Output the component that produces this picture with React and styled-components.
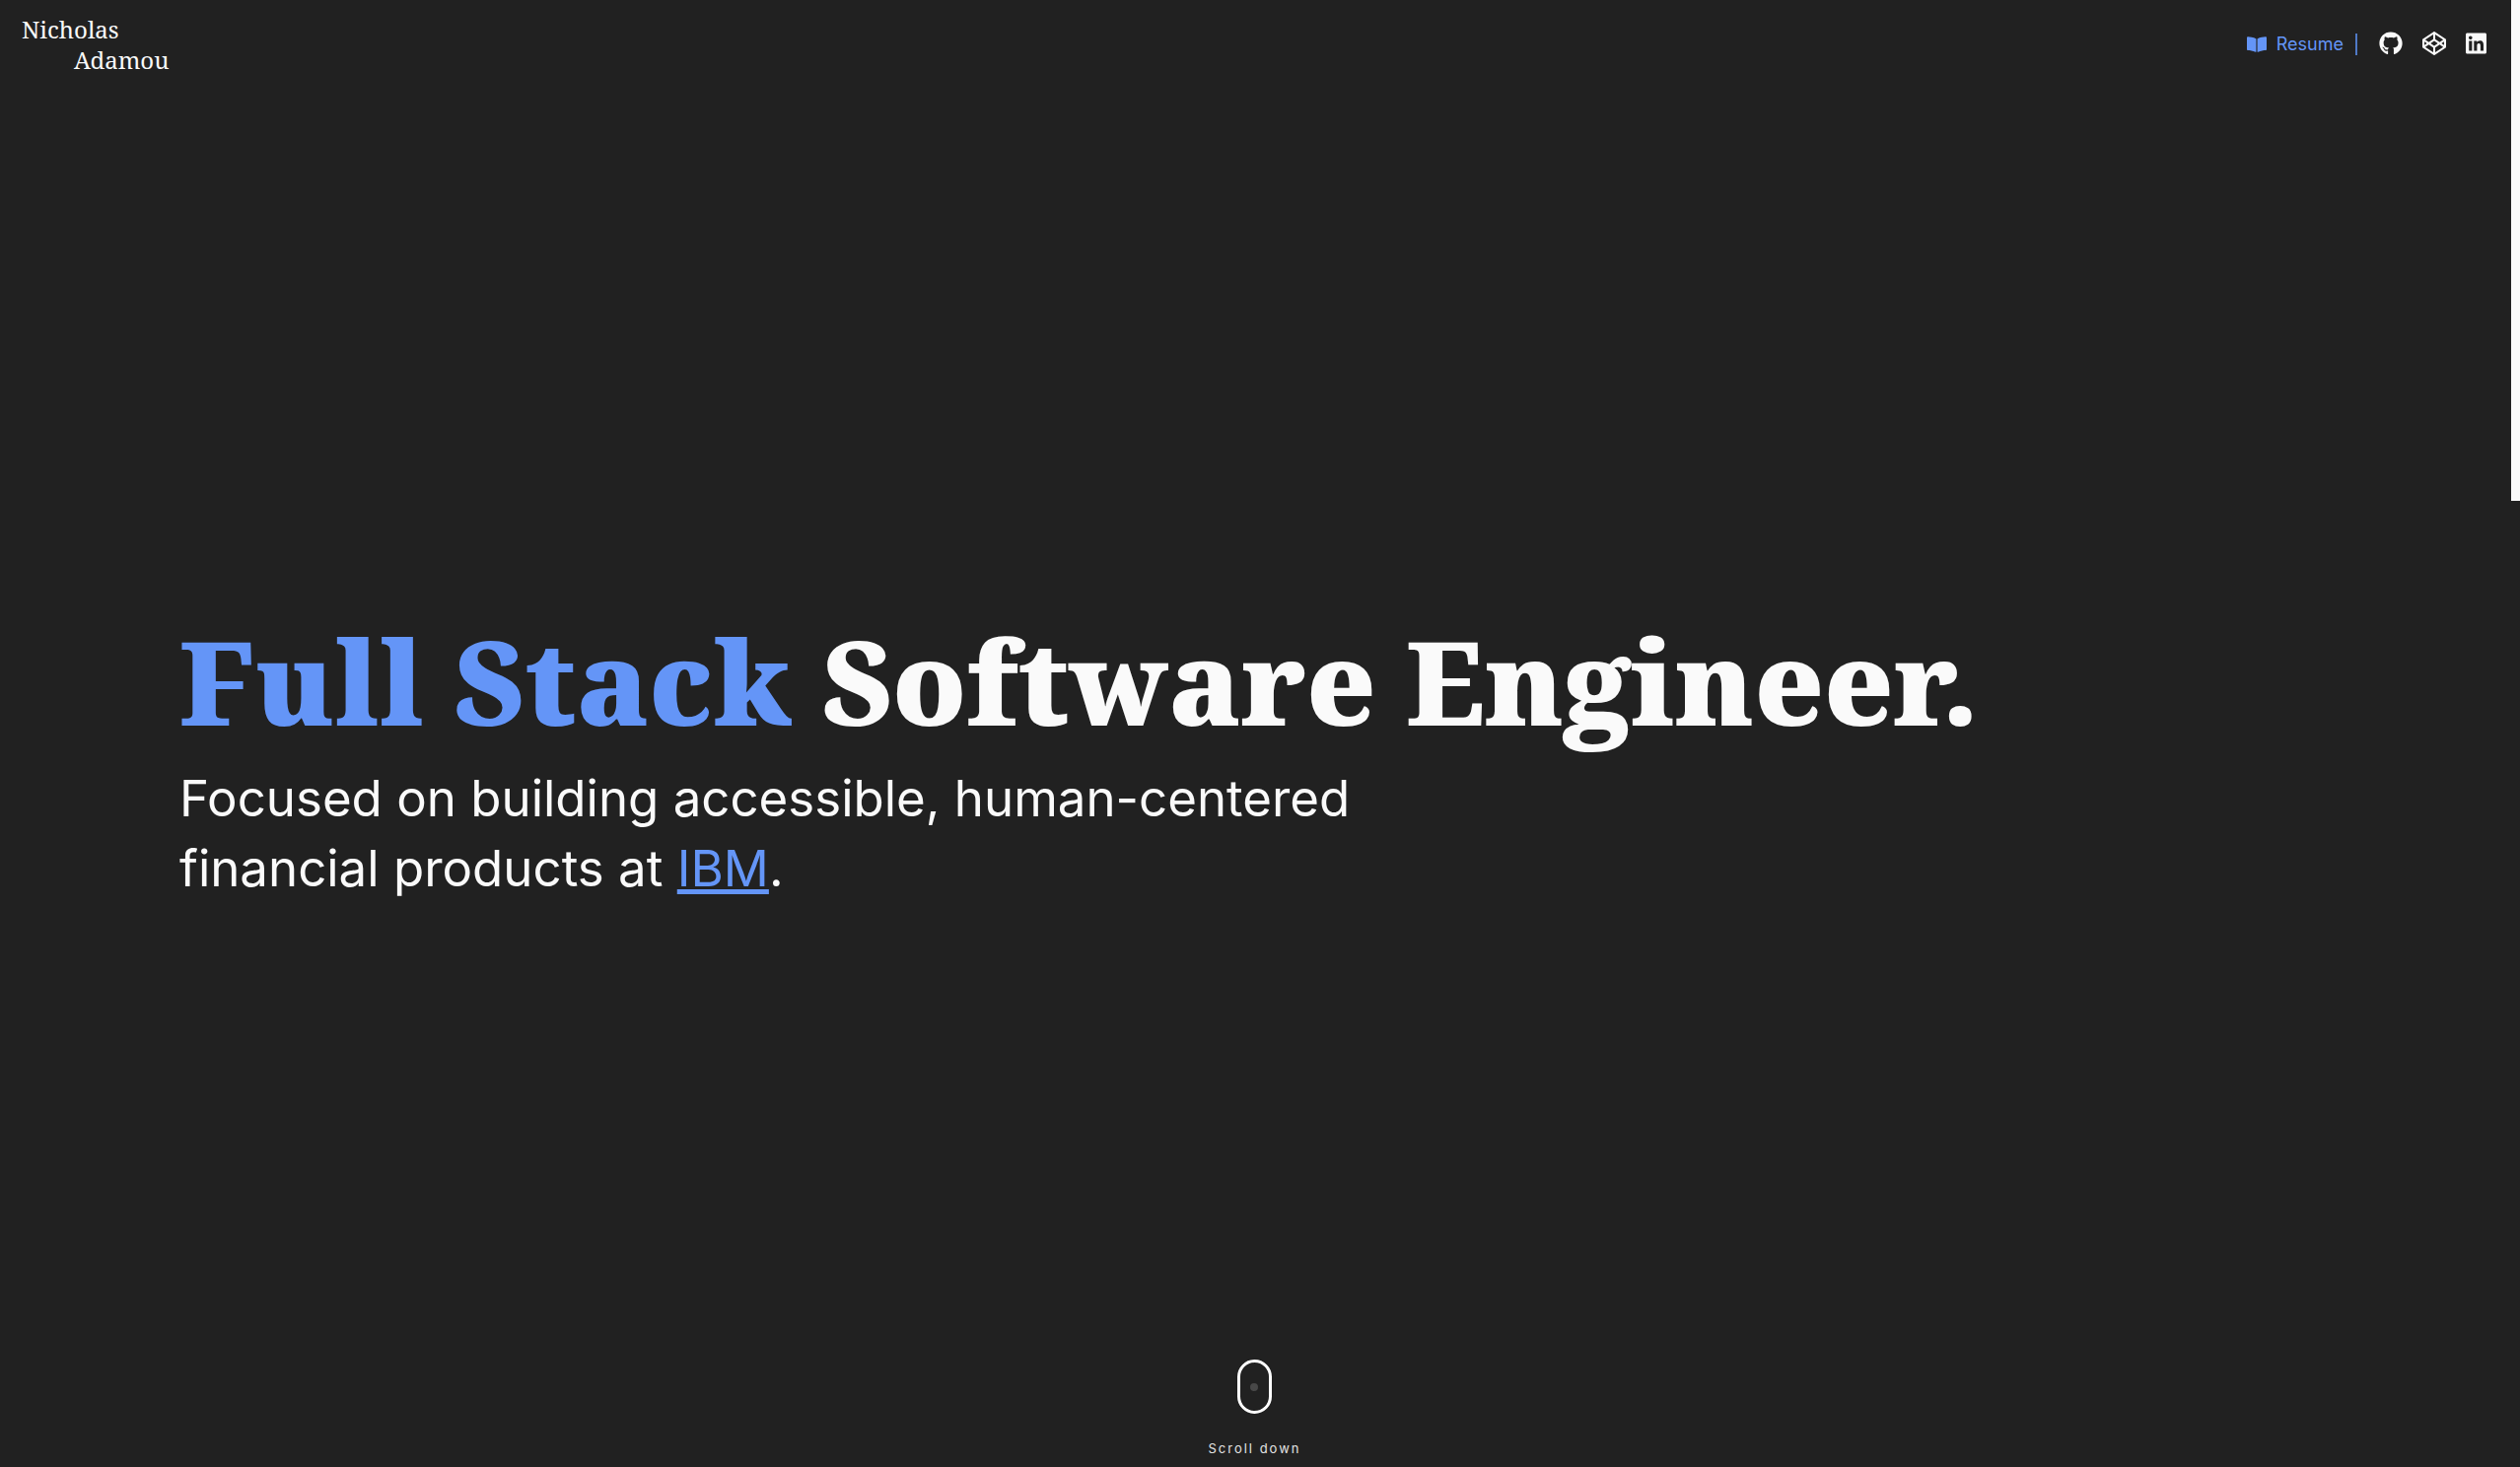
import React from "react";
import styled, { createGlobalStyle } from "styled-components";
import { FaBookOpen, FaGithub, FaCodepen, FaLinkedin } from "react-icons/fa";

const ink = "#fafafa";
const accent = "#6495f7";
const slab = '"Roboto Slab", "Noto Serif", "DejaVu Serif", serif';

const GlobalStyle = createGlobalStyle`
  *, *::before, *::after { box-sizing: border-box; }
  body {
    margin: 0;
    background: #212121;
    color: ${ink};
    font-family: Inter, "Liberation Sans", sans-serif;
  }
`;

const Page = styled.div`
  display: flex;
  flex-direction: column;
  min-height: 100vh;
  padding-right: 11px;
`;

const ScrollThumb = styled.div`
  position: fixed;
  top: 0;
  right: 0;
  width: 9px;
  height: 508px;
  background: ${ink};
`;

const Header = styled.header`
  display: flex;
  justify-content: space-between;
  align-items: flex-start;
  height: 90px;
  padding: 14px 23px 0 22px;
`;

const Logo = styled.a`
  display: flex;
  flex-direction: column;
  color: ${ink};
  font-family: ${slab};
  font-size: 24px;
  line-height: 31px;
  text-decoration: none;
`;

const LastName = styled.span`
  padding-left: 53px;
`;

const Nav = styled.nav`
  display: flex;
  align-items: center;
  gap: 22px;
  height: 62px;
`;

const ResumeLink = styled.a`
  display: flex;
  align-items: center;
  gap: 10px;
  padding-right: 12px;
  border-right: 2px solid #5079c6;
  color: ${accent};
  font-size: 18px;
  line-height: 22px;
  text-decoration: none;
`;

const Socials = styled.div`
  display: flex;
  align-items: center;
  gap: 20px;
  padding-bottom: 2px;
`;

const SocialLink = styled.a`
  display: flex;
  color: ${ink};

  svg {
    width: ${(p) => p.$width}px;
    height: 24px;
  }
`;

const Hero = styled.main`
  flex: 1;
  display: flex;
  flex-direction: column;
  justify-content: center;
  gap: 13px;
  padding: 68px 182px 0;
`;

const Title = styled.h1`
  margin: 0;
  font-family: ${slab};
  font-size: 118px;
  font-weight: 900;
  line-height: 140px;
`;

const Accent = styled.span`
  color: ${accent};
`;

const Tagline = styled.p`
  margin: 0;
  font-size: 51px;
  line-height: 71px;
`;

const InlineLink = styled.a`
  color: ${accent};
  text-decoration: underline;
  text-decoration-thickness: 5px;
`;

const ScrollHint = styled.a`
  align-self: center;
  display: flex;
  flex-direction: column;
  align-items: center;
  gap: 27px;
  padding-bottom: 11px;
  color: #e4e4e4;
  font-size: 13px;
  line-height: 16px;
  letter-spacing: 2px;
  text-decoration: none;
`;

const Mouse = styled.span`
  display: flex;
  align-items: center;
  justify-content: center;
  width: 35px;
  height: 55px;
  border: 3px solid #fff;
  border-radius: 18px;
`;

const Wheel = styled.span`
  width: 8px;
  height: 8px;
  border-radius: 50%;
  background: #484848;
`;

const socials = [
  { label: "GitHub", Icon: FaGithub, width: 24 },
  { label: "CodePen", Icon: FaCodepen, width: 24 },
  { label: "LinkedIn", Icon: FaLinkedin, width: 21 },
];

export default function App() {
  return (
    <>
      <GlobalStyle />
      <Page>
        <Header>
          <Logo href="#home">
            <span>Nicholas</span>
            <LastName>Adamou</LastName>
          </Logo>
          <Nav aria-label="Profile links">
            <ResumeLink href="#resume">
              <FaBookOpen size={20} aria-hidden="true" />
              Resume
            </ResumeLink>
            <Socials>
              {socials.map(({ label, Icon, width }) => (
                <SocialLink key={label} href={`#${label.toLowerCase()}`} aria-label={label} $width={width}>
                  <Icon />
                </SocialLink>
              ))}
            </Socials>
          </Nav>
        </Header>
        <Hero id="home">
          <Title>
            <Accent>Full Stack</Accent> Software Engineer.
          </Title>
          <Tagline>
            Focused on building accessible, human-centered
            <br />
            financial products at <InlineLink href="#ibm">IBM</InlineLink>.
          </Tagline>
        </Hero>
        <ScrollHint href="#about">
          <Mouse aria-hidden="true">
            <Wheel />
          </Mouse>
          <span>Scroll down</span>
        </ScrollHint>
      </Page>
      <ScrollThumb aria-hidden="true" />
    </>
  );
}
